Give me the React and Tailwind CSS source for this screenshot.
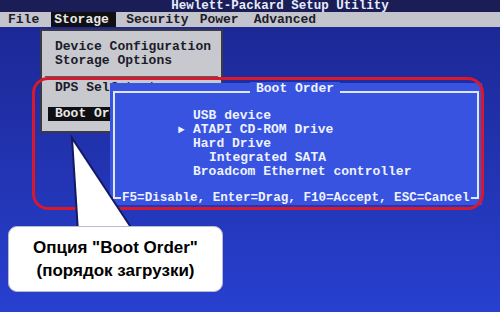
import React from 'react';

const mono = { fontFamily: '"Liberation Mono", "DejaVu Sans Mono", monospace' };

const App = () => {
    return (
        <div className="w-[500px] h-[312px] overflow-hidden relative bg-gradient-to-b from-[#1b2690] to-[#2840d0] font-bold text-[13px] leading-[14px]" style={mono}>
            {/* Title bar */}
            <div className="h-[12px] bg-[#1a1d56] text-[#e8ecff] flex justify-center items-center pl-[60px] text-[12.5px] leading-[12px]">
                <span>Hewlett-Packard Setup Utility</span>
            </div>

            {/* Menu bar */}
            <div className="h-[15px] bg-[#c4c5cc] text-[#1c1c2a] flex items-center">
                <span className="ml-[8px]">File</span>
                <span className="ml-[12px] h-full flex items-center bg-[#101014] text-[#e8e8e8] px-[3px] w-[65px]">Storage</span>
                <span className="ml-[10px]">Security</span>
                <span className="ml-[11px]">Power</span>
                <span className="ml-[15px]">Advanced</span>
            </div>

            {/* Storage dropdown */}
            <div className="absolute left-[40px] top-[29px] w-[183px] h-[104px] bg-[#c8c9cf] border-2 border-double border-[#3a3a44] text-[#1c1c2a]">
                <div className="pl-[13px] pt-[9px]">Device Configuration</div>
                <div className="pl-[13px]">Storage Options</div>
                <div className="mx-[3px] mt-[8px] border-t border-[#5a5a66]"></div>
                <div className="pl-[13px] mt-[4px]">DPS Self-test</div>
                <div className="ml-[6px] mt-[12px] pl-[7px] bg-[#101014] text-[#e8e8e8] h-[14px]">Boot Order</div>
            </div>

            {/* Boot Order panel */}
            <div className="absolute left-[110px] top-[83px] w-[372px] h-[122px] bg-[#3753e0] text-[#eef2ff]">
                <div className="absolute left-[3px] right-[3px] top-[8px] bottom-[7px] border-2 border-b-0 border-[#dfe6ff]"></div>
                <div className="absolute left-[140px] top-[-2px] px-[6px] bg-[#3753e0] leading-[14px] mt-[1px]">Boot Order</div>
                <div className="absolute left-[68px] top-[26px]">
                    <div className="pl-[15px]">USB device</div>
                    <div><span className="inline-block w-[15px] text-[11px]">►</span>ATAPI CD-ROM Drive</div>
                    <div className="pl-[15px]">Hard Drive</div>
                    <div className="pl-[31px]">Integrated SATA</div>
                    <div className="pl-[15px]">Broadcom Ethernet controller</div>
                </div>
                <div className="absolute left-[3px] right-[3px] top-[108px] flex items-center text-[12.6px]">
                    <span className="w-[8px] border-t-2 border-[#dfe6ff]"></span>
                    <span className="px-[1px] whitespace-nowrap">F5=Disable, Enter=Drag, F10=Accept, ESC=Cancel</span>
                    <span className="flex-1 border-t-2 border-[#dfe6ff]"></span>
                </div>
            </div>

            {/* Red highlight */}
            <div className="absolute left-[32px] top-[77px] w-[452px] h-[133px] border-[3px] border-[#d8182c] rounded-[16px]"></div>

            {/* Callout pointer */}
            <svg className="absolute left-0 top-0" width="500" height="312">
                <polygon points="72,138 78,232 134,232" fill="#ffffff" stroke="#141a60" strokeWidth="2" />
            </svg>

            {/* Callout box */}
            <div className="absolute left-[8px] top-[226px] w-[215px] h-[66px] bg-white rounded-[9px] border border-[#b8bcc8] flex flex-col items-center justify-center text-black text-[17px] leading-[23px] font-bold" style={{ fontFamily: '"Liberation Sans", Arial, sans-serif' }}>
                <div>Опция "Boot Order"</div>
                <div>(порядок загрузки)</div>
            </div>
        </div>
    );
};

export default App;
